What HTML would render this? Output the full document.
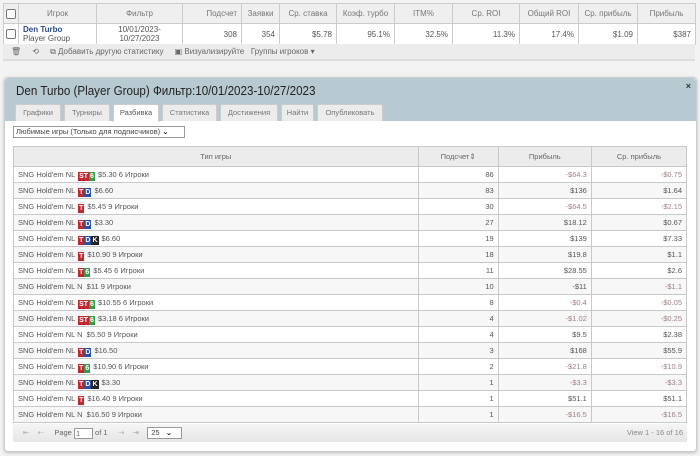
<!DOCTYPE html>
<html><head><meta charset="utf-8"><style>
*{box-sizing:border-box;margin:0;padding:0}
body{width:700px;height:456px;background:#f3f3f3;font-family:"Liberation Sans","DejaVu Sans",sans-serif;font-size:8px;color:#555;position:relative;overflow:hidden}
.abs{position:absolute}
table{border-collapse:collapse;table-layout:fixed}
#top{left:3px;top:3px;width:692px;background:#fff}
#top td{border:1px solid #ccc;height:21px;padding:0 4px;white-space:nowrap}
#top tr.hh td{background:#efefef;color:#777;text-align:center;height:20px}
#top tr.dr td{text-align:right;color:#555;background:#fff}
.cb{display:inline-block;width:10px;height:10px;border:1px solid #777;border-radius:2px;background:#fff;vertical-align:middle}
#tb{left:3px;top:44px;width:692px;height:17px;background:#ececec;border-bottom:2px solid #ddd;color:#666;padding-left:8px;line-height:16px}
#panel{left:4px;top:77px;width:693px;height:375px;background:#fff;border:1px solid #ccc;border-radius:4px;box-shadow:0 1px 3px #bbb}
#ph{left:0;top:0;width:691px;height:43px;background:#b7c9d1;border-radius:4px 4px 0 0}
#ph h1{position:absolute;left:11px;top:6px;font-size:12.5px;font-weight:normal;color:#222;transform:scaleX(0.93);transform-origin:left}
.tab{position:absolute;top:26px;height:17px;background:#ececec;border:1px solid #ccc;border-bottom:none;color:#777;text-align:center;line-height:16px;font-size:7.5px;border-radius:2px 2px 0 0}
.tab.a{background:#fff;color:#555;height:18px}
#sel{left:8px;top:48px;width:172px;height:12px;border:1px solid #999;font-size:7.5px;line-height:10px;padding-left:2px;color:#444}
#grid{left:8px;top:68px;width:674px}
#grid td{border:1px solid #c8c8c8;height:16px;padding:0 4px;white-space:nowrap;font-size:7.5px;line-height:14px;vertical-align:middle}
#grid tr.hh td{background:#ececec;height:20px;text-align:center;color:#666}
#grid tr:nth-child(odd):not(.hh) td{background:#f7f7f7}
#grid td.r{text-align:right}
.neg{color:#a08080}
.b{display:inline-block;height:9px;vertical-align:-1px;font-size:7px;font-weight:bold;color:#fff;line-height:9px;margin:0 3px 0 1px}
.b i{font-style:normal;display:inline-block;padding:0 1px;height:9px}
.bt{background:#c0282d}.bd{background:#2a4fa0}.bk{background:#222}.bg{background:#3a9a48}
#ft{left:8px;top:346px;width:674px;height:18px;background:linear-gradient(#f5f5f5,#e6e6e6);color:#aaa;font-size:7.5px;line-height:18px}
</style></head><body>
<table id="top" class="abs">
<colgroup><col style="width:15px"><col style="width:78px"><col style="width:86px"><col style="width:59px"><col style="width:38px"><col style="width:57px"><col style="width:58px"><col style="width:58px"><col style="width:67px"><col style="width:59px"><col style="width:59px"><col style="width:58px"></colgroup>
<tr class="hh"><td style="padding:0 2px"><span class="cb"></span></td><td>Игрок</td><td>Фильтр</td><td style="text-align:right">Подсчет</td><td>Заявки</td><td>Ср. ставка</td><td>Коэф. турбо</td><td>ITM%</td><td>Ср. ROI</td><td>Общий ROI</td><td>Ср. прибыль</td><td>Прибыль</td></tr>
<tr class="dr"><td style="padding:0 2px"><span class="cb"></span></td><td style="text-align:left;line-height:9px"><b style="color:#2a4a8a">Den Turbo</b><br>Player Group</td><td style="text-align:center;line-height:9px">10/01/2023-<br>10/27/2023</td><td>308</td><td>354</td><td>$5.78</td><td>95.1%</td><td>32.5%</td><td>11.3%</td><td>17.4%</td><td>$1.09</td><td>$387</td></tr>
</table>
<div id="tb" class="abs">🗑&nbsp;&nbsp;&nbsp;&nbsp;&nbsp;⟲&nbsp;&nbsp;&nbsp;&nbsp;&nbsp;⧉ Добавить другую статистику&nbsp;&nbsp;&nbsp;&nbsp;&nbsp;▣ Визуализируйте&nbsp;&nbsp;&nbsp;Группы игроков ▾</div>
<div id="panel" class="abs">
<div id="ph" class="abs"><h1>Den Turbo (Player Group) Фильтр:10/01/2023-10/27/2023</h1>
<span style="position:absolute;right:5px;top:3px;font-size:9px;font-weight:bold;color:#333">×</span>
<div class="tab" style="left:10px;width:46px">Графики</div>
<div class="tab" style="left:59px;width:46px">Турниры</div>
<div class="tab a" style="left:108px;width:46px">Разбивка</div>
<div class="tab" style="left:157px;width:55px">Статистика</div>
<div class="tab" style="left:215px;width:58px">Достижения</div>
<div class="tab" style="left:276px;width:33px">Найти</div>
<div class="tab" style="left:312px;width:66px">Опубликовать</div>
</div>
<div id="sel" class="abs">Любимые игры (Только для подписчиков) <b style="color:#000">⌄</b></div>
<table id="grid" class="abs">
<colgroup><col style="width:404px"><col style="width:80px"><col style="width:93px"><col style="width:95px"></colgroup>
<tr class="hh"><td>Тип игры</td><td>Подсчет⇕</td><td>Прибыль</td><td>Ср. прибыль</td></tr>
<tr><td>SNG Hold'em NL <span class="b"><i class="bt">ST</i><i class="bg">6</i></span>$5.30 6 Игроки</td><td class="r">86</td><td class="r neg">-$64.3</td><td class="r neg">-$0.75</td></tr>
<tr><td>SNG Hold'em NL <span class="b"><i class="bt">T</i><i class="bd">D</i></span>$6.60</td><td class="r">83</td><td class="r">$136</td><td class="r">$1.64</td></tr>
<tr><td>SNG Hold'em NL <span class="b"><i class="bt">T</i></span>$5.45 9 Игроки</td><td class="r">30</td><td class="r neg">-$64.5</td><td class="r neg">-$2.15</td></tr>
<tr><td>SNG Hold'em NL <span class="b"><i class="bt">T</i><i class="bd">D</i></span>$3.30</td><td class="r">27</td><td class="r">$18.12</td><td class="r">$0.67</td></tr>
<tr><td>SNG Hold'em NL <span class="b"><i class="bt">T</i><i class="bd">D</i><i class="bk">K</i></span>$6.60</td><td class="r">19</td><td class="r">$139</td><td class="r">$7.33</td></tr>
<tr><td>SNG Hold'em NL <span class="b"><i class="bt">T</i></span>$10.90 9 Игроки</td><td class="r">18</td><td class="r">$19.8</td><td class="r">$1.1</td></tr>
<tr><td>SNG Hold'em NL <span class="b"><i class="bt">T</i><i class="bg">6</i></span>$5.45 6 Игроки</td><td class="r">11</td><td class="r">$28.55</td><td class="r">$2.6</td></tr>
<tr><td>SNG Hold'em NL N&nbsp; $11 9 Игроки</td><td class="r">10</td><td class="r">-$11</td><td class="r neg">-$1.1</td></tr>
<tr><td>SNG Hold'em NL <span class="b"><i class="bt">ST</i><i class="bg">6</i></span>$10.55 6 Игроки</td><td class="r">8</td><td class="r neg">-$0.4</td><td class="r neg">-$0.05</td></tr>
<tr><td>SNG Hold'em NL <span class="b"><i class="bt">ST</i><i class="bg">6</i></span>$3.18 6 Игроки</td><td class="r">4</td><td class="r neg">-$1.02</td><td class="r neg">-$0.25</td></tr>
<tr><td>SNG Hold'em NL N&nbsp; $5.50 9 Игроки</td><td class="r">4</td><td class="r">$9.5</td><td class="r">$2.38</td></tr>
<tr><td>SNG Hold'em NL <span class="b"><i class="bt">T</i><i class="bd">D</i></span>$16.50</td><td class="r">3</td><td class="r">$168</td><td class="r">$55.9</td></tr>
<tr><td>SNG Hold'em NL <span class="b"><i class="bt">T</i><i class="bg">6</i></span>$10.90 6 Игроки</td><td class="r">2</td><td class="r neg">-$21.8</td><td class="r neg">-$10.9</td></tr>
<tr><td>SNG Hold'em NL <span class="b"><i class="bt">T</i><i class="bd">D</i><i class="bk">K</i></span>$3.30</td><td class="r">1</td><td class="r neg">-$3.3</td><td class="r neg">-$3.3</td></tr>
<tr><td>SNG Hold'em NL <span class="b"><i class="bt">T</i></span>$16.40 9 Игроки</td><td class="r">1</td><td class="r">$51.1</td><td class="r">$51.1</td></tr>
<tr><td>SNG Hold'em NL N&nbsp; $16.50 9 Игроки</td><td class="r">1</td><td class="r neg">-$16.5</td><td class="r neg">-$16.5</td></tr>
</table>
<div id="ft" class="abs"><span style="margin-left:10px">⇤&nbsp;&nbsp;&nbsp;&nbsp;⇠&nbsp;&nbsp;&nbsp;&nbsp;&nbsp;</span><span style="color:#666">Page <span style="display:inline-block;width:19px;height:11px;border:1px solid #999;background:#fff;vertical-align:middle;line-height:9px;padding-left:1px">1</span> of 1</span>&nbsp;&nbsp;&nbsp;&nbsp;&nbsp;⇢&nbsp;&nbsp;&nbsp;&nbsp;⇥&nbsp;&nbsp;&nbsp;&nbsp;<span style="display:inline-block;width:35px;height:12px;border:1px solid #999;background:#fff;vertical-align:middle;line-height:10px;color:#444;padding-left:3px">25 &nbsp;&nbsp;<b style="color:#000">⌄</b></span><span style="position:absolute;right:4px;color:#888">View 1 - 16 of 16</span></div>
</div>
</body></html>
